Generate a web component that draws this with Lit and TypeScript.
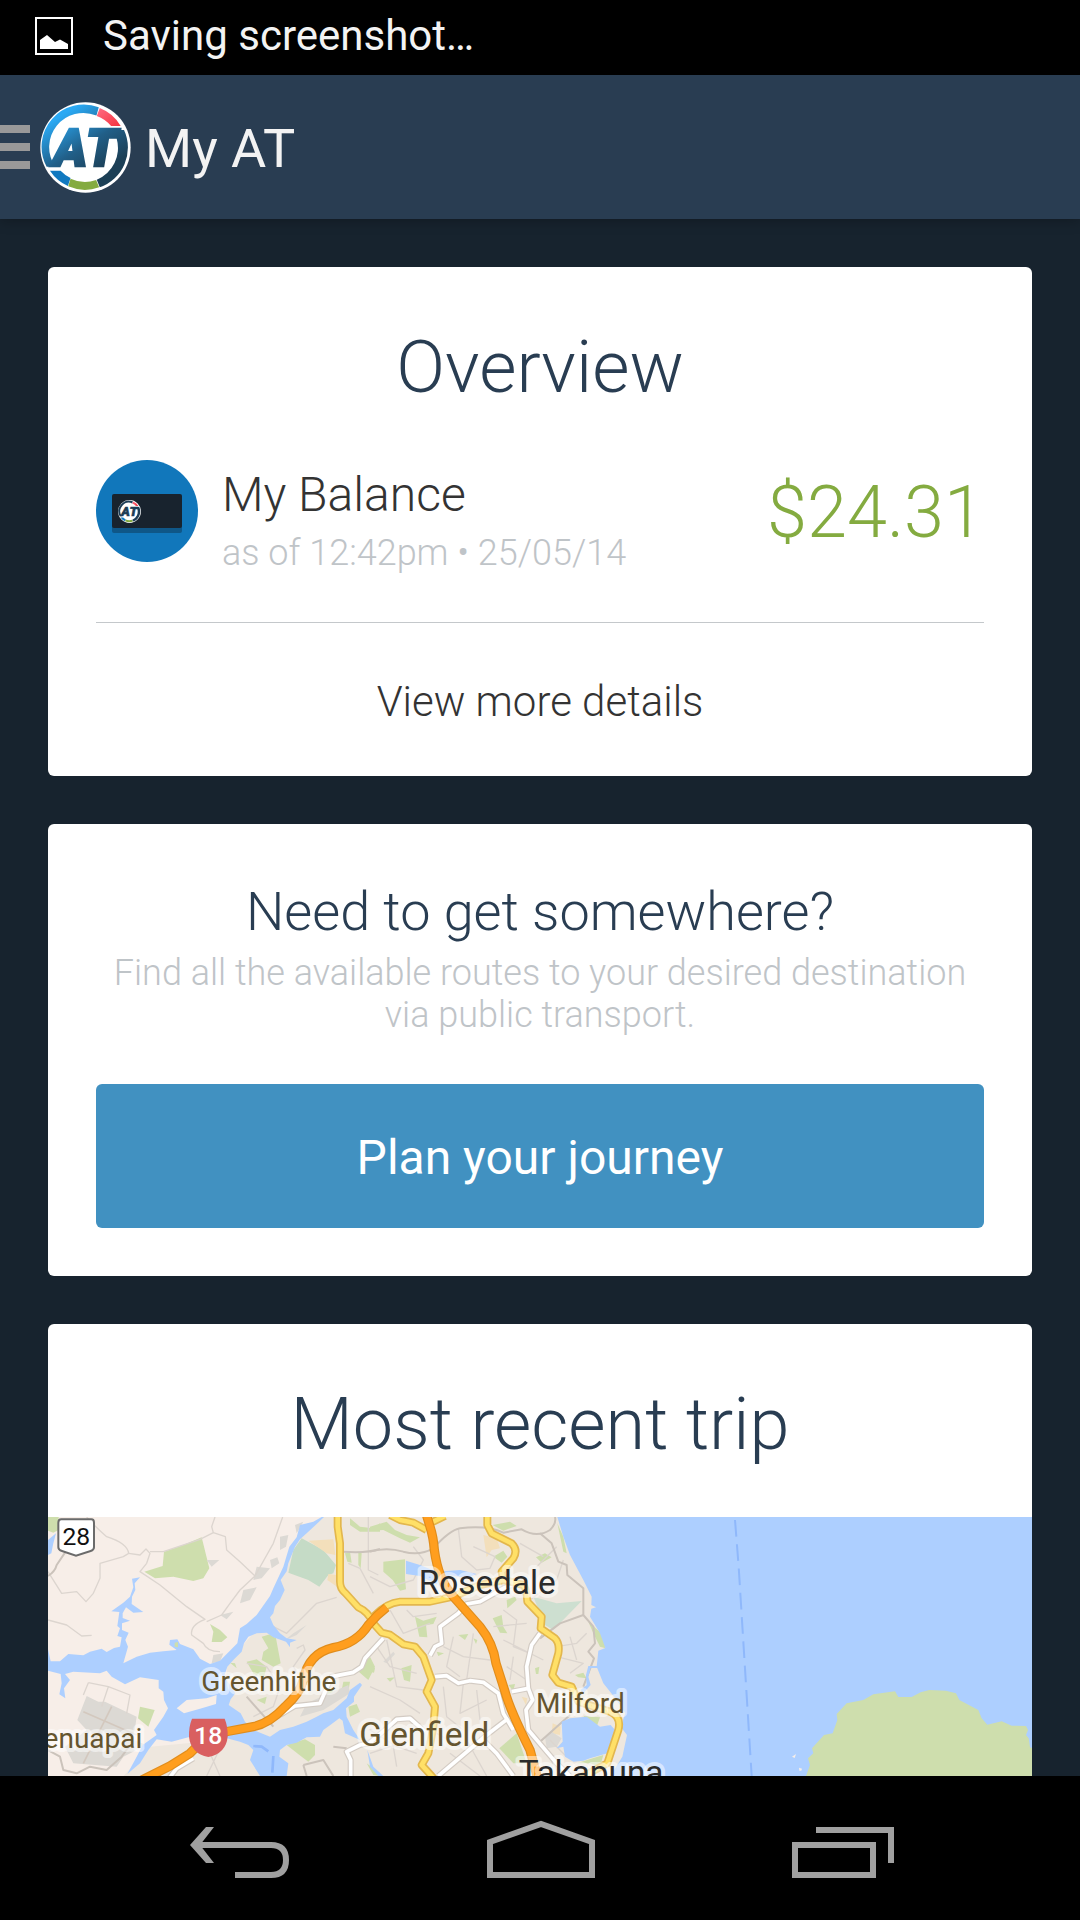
import { LitElement, html, svg, css } from "lit";
import { customElement } from "lit/decorators.js";

type Stroke = { d: string; dx?: number };

/* Road geometry; dx shifts a path eastwards on the map canvas. */
const EAST = 990;

const localStreets: Stroke[] = [
  { d: "M140 51Q165 80 200 110Q262 130 266 160L250 170L180 190V235L160 280L138 305L110 275L65 280L24 215" },
  { d: "M266 160L300 165L318 147L330 160L320 190L300 215L360 255L440 320L495 358Q450 375 455 405L490 430Q500 455 540 455" },
  { d: "M330 155L370 155L480 118L520 98L515 80L525 51" },
  { d: "M520 98L556 110L560 150L600 185L645 228L700 130L728 51" },
  { d: "M645 228L600 270L570 310L545 345L500 365" },
  { d: "M24 360L80 375L125 408L155 406" },
  { d: "M700 380L740 400L780 360L830 310L890 292" },
  { d: "M620 490L680 500L720 560L700 620L640 650" },
  { d: "M770 445L790 435L795 450L760 500L780 530" },
  { d: "M925 190L960 205L1000 280" },
  { d: "M985 51V210L1015 225" },
  { d: "M480 740L510 760L540 828M540 745L500 828" },
  { d: "M145 548L205 560L270 585L260 640M145 548L130 585M205 560L185 620" },
  { d: "M0 230L60 260L130 240L160 180L130 140" , dx: EAST },
  { d: "M265 85L275 170L320 210L360 205L375 170L310 140", dx: EAST },
  { d: "M60 330L100 400L180 370M110 330L130 350L200 340", dx: EAST },
  { d: "M220 440L280 470L360 480M250 410L230 500L270 530M310 400L290 540", dx: EAST },
  { d: "M20 440L60 500L140 520M50 420L80 560L160 570M0 560L90 600L150 640", dx: EAST },
  { d: "M220 560L230 650L280 690M280 550L270 640L350 600M320 570L330 660", dx: EAST },
  { d: "M400 330L440 360L430 440L480 460M370 380L470 370M400 420L520 480", dx: EAST },
  { d: "M560 440L620 430L650 400M560 470L640 490L600 520M600 410L620 480", dx: EAST },
  { d: "M410 500L470 540M430 470L420 540", dx: EAST },
  { d: "M480 300L560 240L580 180M500 200L560 140M450 130L520 170", dx: EAST },
  { d: "M0 690L80 740L140 760M60 680L80 800M0 760L120 720", dx: EAST },
  { d: "M200 700L270 740M240 760L330 828M290 720L350 828", dx: EAST },
  { d: "M520 740L570 828M540 720L590 770M600 700L570 740", dx: EAST },
];

const mediumStreets: Stroke[] = [
  { d: "M24 228Q45 215 50 195L75 158" },
  { d: "M620 590L700 680" },
  { d: "M24 750L60 770L70 810L110 820L150 800L200 810L245 770L270 735" },
  { d: "M790 795L850 780L880 828M790 795L800 828M880 740L920 745" },
  { d: "M910 155Q980 160 1020 147" },
  { d: "M0 155Q50 140 100 155Q150 168 190 145Q240 90 270 85Q350 75 400 98L455 88Q500 115 540 90Q560 70 555 51", dx: EAST },
  { d: "M510 100L545 130L565 185L590 195L592 225L640 265V345L670 380L675 430L655 455L672 475L640 560", dx: EAST },
  { d: "M640 345L570 370L510 415M510 725L600 645", dx: EAST },
];

const whiteRoads: Stroke[] = [
  { d: "M720 645L765 618L840 610L875 530L940 517L965 500L975 475L1030 415" },
  { d: "M385 838L410 805L460 775" },
  { d: "M1000 727L960 735L920 755L932 780V860" },
  { d: "M180 467L195 440L215 430L210 380L265 340L290 312L330 305L400 265L440 250", dx: EAST },
  { d: "M195 530L230 527L265 550L300 542L340 547L385 580L400 640L430 690", dx: EAST },
  { d: "M510 400L485 435L470 500L475 565L488 600L468 630L475 690L560 790L600 828", dx: EAST },
  { d: "M475 565L425 575M415 655L350 705L205 828M340 720L380 760L430 828", dx: EAST },
  { d: "M0 727L45 690L80 658L120 655L165 695", dx: EAST },
];

const yellowRoads: Stroke[] = [
  { d: "M893 40V80L900 130V245Q900 265 915 278L955 322Q985 335 1000 370L1025 398L1050 404L1090 433L1125 440L1150 470L1175 540L1160 575L1185 620L1180 680L1165 760L1145 795L1175 828L1210 870" },
  { d: "M352 40V75L365 100L425 130Q445 150 430 175L395 215L400 240L460 255Q470 265 472 305L515 350L512 385L555 415Q570 430 565 460L547 525L565 548L605 560L625 605L720 635Q755 650 745 690L712 790L600 850", dx: EAST },
  { d: "M60 45L90 60L130 68L170 90M225 48L175 72", dx: EAST },
  { d: "M10 350Q50 308 90 305L180 305L250 290L330 255L400 240", dx: EAST },
];

const motorways: Stroke[] = [
  { d: "M290 848L390 798L450 760L505 705L570 693L640 680Q690 670 735 620Q780 580 790 540Q805 460 880 443Q950 430 985 375Q1010 345 1040 322" },
  { d: "M168 40L180 80Q190 110 193 150Q205 240 250 290L330 380Q370 430 378 490L405 575Q420 630 480 750L510 860", dx: EAST },
];

const lines = (roads: Stroke[], cls: string) =>
  svg`<g class=${cls}>${roads.map(
    (r) => svg`<path d=${r.d} transform="translate(${r.dx ?? 0} 0)"></path>`
  )}</g>`;

@customElement("at-logo")
export class AtLogo extends LitElement {
  static properties = { flat: { type: Boolean } };
  declare flat: boolean;

  static styles = css`
    :host { display: block; }
    .logo { display: block; width: 100%; height: 100%; }
    .mono { font: italic 900 156px Roboto, sans-serif; stroke-width: 7; }
  `;

  render() {
    const ink = this.flat ? "#1d3d56" : "url(#ink)";
    return html`
      <svg class="logo" viewBox="28 33 274 274" role="img" aria-label="Auckland Transport">
        <defs>
          <linearGradient id="ink" gradientUnits="userSpaceOnUse" x1="90" y1="75" x2="200" y2="250">
            <stop offset="0" stop-color="#2aa9f4"></stop>
            <stop offset=".55" stop-color="#215f88"></stop>
            <stop offset="1" stop-color="#1c3f56"></stop>
          </linearGradient>
          <linearGradient id="red" x1="0" y1="0" x2="1" y2="1">
            <stop offset="0" stop-color="#ff6d84"></stop>
            <stop offset="1" stop-color="#f5333f"></stop>
          </linearGradient>
        </defs>
        <circle cx="165" cy="170" r="136" fill="#fff"></circle>
        <path d="M205 49A127 127 0 0 0 48 228H74A103 103 0 0 1 198 74Z" fill=${ink}></path>
        <path d="M208 51A127 127 0 0 1 271 105H242A103 103 0 0 0 199 75Z" fill="url(#red)"></path>
        <path d="M58 240H90A103 103 0 0 0 120 262L112 286A127 127 0 0 1 58 240Z" fill="#1079c0"></path>
        <path d="M120 264A103 103 0 0 0 197 268L206 290A127 127 0 0 1 113 287Z" fill="#84ab40"></path>
        <path d="M230 117H281A127 127 0 0 1 208 290L199 267A103 103 0 0 0 259 144H230Z" fill=${ink}></path>
        <text class="mono" x="67" y="227" fill=${ink} stroke=${ink}>A</text>
        <text class="mono" x="166" y="227" fill=${ink} stroke=${ink}>T</text>
      </svg>
    `;
  }
}

@customElement("trip-map")
export class TripMap extends LitElement {
  static styles = css`
    :host { display: block; }
    .map { display: block; width: 100%; height: auto; }
    .local, .medium, .white, .yellow, .motorway { fill: none; stroke-linejoin: round; }
    .local { stroke: #dcd5cf; stroke-width: 4; }
    .medium { stroke: #cbc3bb; stroke-width: 6; }
    .white-casing { fill: none; stroke: #d3cbc3; stroke-width: 18; stroke-linejoin: round; }
    .white { stroke: #fff; stroke-width: 11; }
    .yellow-casing { fill: none; stroke: #e3b74d; stroke-width: 24; stroke-linejoin: round; }
    .yellow { stroke: #ffe067; stroke-width: 14; }
    .motorway-casing { fill: none; stroke: #e08d1c; stroke-width: 28; }
    .motorway { stroke: #ff9e1e; stroke-width: 21; }
    .label {
      font-family: Roboto, sans-serif;
      font-weight: 400;
      paint-order: stroke;
      stroke: #fff;
      stroke-opacity: .5;
      stroke-width: 24;
      stroke-linejoin: round;
    }
    .town { font-size: 100px; fill: #2b2b2b; }
    .suburb { font-size: 100px; fill: #65552f; }
    .village { font-size: 84px; fill: #65552f; }
    .edge { text-anchor: end; }
    .shield { font: 400 74px Roboto, sans-serif; text-anchor: middle; }
    .strong { font-weight: 500; }
  `;

  render() {
    return html`
      <svg class="map" viewBox="24 51 2952 1440" role="img" aria-label="Map of the most recent trip">
        <rect x="24" y="51" width="2952" height="1440" fill="#f7eee8"></rect>
        <path fill="#eee7de" d="M848 51L770 112L720 250L690 350L640 400L560 490V620L640 700L600 715L330 740L240 840V1491H2976V51Z"></path>

        <g fill="#cedead">
          <path d="M24 51H56V90L40 98L24 92Z"></path>
          <path d="M313 215L368 198L372 155L430 135L485 112L508 205L490 235L460 243L400 230L345 235Z"></path>
          <path d="M510 372L540 390L562 412L545 426H515L520 395Z"></path>
          <path d="M665 410L690 403L708 415L722 490L700 500L665 480L670 455L685 445Z"></path>
          <path d="M620 485L650 478L680 500L670 540L640 520Z"></path>
          <path d="M300 620L344 630L325 680L294 655Z"></path>
          <path d="M740 735L795 718L825 735V765L805 785L785 770Z"></path>
          <path d="M930 55L960 80L1000 85L1020 70V95L960 95L930 75Z"></path>
          <path d="M950 510L990 470L1005 500L985 540ZM910 545L930 545L925 572L905 570ZM925 620L950 612L960 635L930 650ZM915 160L930 155L935 188L922 185ZM955 155L965 160L962 205L955 195ZM980 790L1020 820V828L1000 825Z"></path>
          <path d="M650 600L680 590L675 612ZM860 560L880 570L870 590L850 580ZM570 488L585 490L590 505Z"></path>
        </g>
        <path fill="#c5dbc6" d="M785 115L850 150L888 195L880 220L865 225L838 260L805 240L745 218L760 150Z"></path>
        <path fill="#f3dfbb" d="M805 122L880 118L886 165L860 160ZM865 222L888 225V258L862 240Z"></path>
        <path fill="#dcd9d4" d="M140 588L175 605L195 605L290 650L280 720L320 735L250 770L230 800L100 790L75 740L140 690L112 660Z"></path>
        <path fill="none" stroke="#d3c8be" stroke-width="5" d="M130 635L290 705M215 620L130 790"></path>
        <path fill="#dcd9d4" d="M765 75L790 65L770 100ZM720 110L745 105L738 140L720 150ZM690 180L712 172L718 190L695 205ZM650 200L690 205L665 235L640 240ZM610 270L650 262L630 300L600 310ZM540 345L580 335L560 358ZM500 180L538 180L515 200ZM520 465L550 460L540 485L515 490ZM800 610L925 555L930 580L850 630L780 650ZM760 400L800 375L770 405L735 420Z"></path>

        <g fill="#cedead" transform="translate(990 0)">
          <path d="M0 80L50 65L75 90L110 105L150 112L120 128L90 115L40 90L0 92Z"></path>
          <path d="M40 185L105 178V235L108 268L90 272L68 240L40 215Z"></path>
          <path d="M135 350L160 362L200 350L190 372L168 375L172 412L148 410Z"></path>
          <path d="M368 355L395 345L400 380L412 400L390 398Z"></path>
          <path d="M94 505L125 495L120 545L102 540ZM0 490L15 505L12 518L0 515ZM50 535L75 532L60 545ZM265 405L295 402L285 420ZM200 455L222 460L205 468ZM495 505L508 500L505 522L498 522ZM310 415L322 420L318 432Z"></path>
          <path d="M388 745L440 700L470 790L430 790Z"></path>
          <path d="M370 170L400 152L412 170L395 188ZM498 172L525 160L545 172L515 188ZM368 75L420 65L440 78L400 92ZM410 300L435 290L440 300L412 325Z"></path>
          <path d="M562 70L580 110L590 160L580 155ZM655 365L700 405L707 445L690 440L670 400ZM640 648L690 652L680 680L660 668ZM620 790L700 765L690 800L660 790ZM615 525L640 518L650 535L625 532ZM415 555L435 552L430 572Z"></path>
        </g>
        <g transform="translate(990 0)">
          <path fill="#f3dfbb" d="M340 105L380 115L390 145L365 150L350 172ZM548 670L572 680L570 705L545 700ZM455 590L472 595L468 615Z"></path>
          <path fill="#cddfd0" d="M490 290L560 310L635 303L550 390L525 375Z"></path>
          <path fill="#dcd9d4" d="M525 710L545 695L575 715L560 740L530 745ZM40 485L70 455L75 462L50 490Z"></path>
        </g>

        ${lines(localStreets, "local")}
        ${lines(mediumStreets, "medium")}

        <g fill="#adcfff">
          <path d="M24 448L32 484L60 484L85 462L130 466L150 455L185 446L200 456L222 444L240 440L245 412L232 408L240 385L232 378L238 336L214 334L250 308L270 290L280 262L276 236L300 232L284 250L286 270L276 290L275 312L310 336L280 338L258 322L248 340V354L270 362L246 370V390L266 398L256 420L264 440L250 490L290 470L330 458L370 454L410 450L388 434L390 420L412 418L420 432L460 448L480 476L510 492L540 482L560 462L592 430L600 385L620 372L650 345L690 288L700 265L730 200L748 140L770 112L780 75L820 65L845 51H852L830 72L800 100L780 118L765 140L745 190L740 214L722 240L734 270L720 300L705 318L700 340L690 352L700 375L720 400L740 415L770 420L750 428V442L738 425L700 412L680 398L650 400L625 410L612 430L605 455L580 480L562 500L552 530L570 555L586 580L572 598L566 615L602 640L615 665L640 690L690 710L720 690L760 680L800 665L830 650L850 640L880 630L920 595L930 570L960 548L966 555L942 590V605L918 625L920 650L940 690L960 720L915 700L908 662L898 655L875 672L850 690L840 710L800 712L770 728L740 735L720 750L718 770L745 790L740 828V1491H660V828L630 780L640 750L625 735L600 725L560 715L445 712L395 725L350 718L325 750L300 790L262 822L290 770L308 735L350 705L342 690L370 650L384 625L372 600L370 575L356 565V540L300 532L255 553L215 530L200 512L180 520L100 515L75 522L90 540L72 565L76 595L58 583L65 550L62 522L24 512Z"></path>
          <path d="M48 100L24 120V165L34 160L40 130Z"></path>
          <path d="M982 750L1000 800L1030 828L1015 828L990 800Z"></path>
        </g>
        <path fill="#f7eee8" d="M410 625L440 600L500 595L530 585L528 612L480 626L432 640Z"></path>
        <path fill="#cedead" d="M404 428L414 426V442L404 440Z"></path>
        <path fill="none" stroke="#8fb8fb" stroke-width="8" d="M640 738L665 740L685 754M700 768L697 818"></path>

        <g fill="#adcfff" transform="translate(990 0)">
          <path d="M562 51L580 110L600 165L640 240L665 290L664 315L678 322L664 326L660 350L690 400L706 444L685 452L680 500L700 550L740 600L766 640L752 680L771 705L757 770L720 830V1491H1986V51Z"></path>
          <path d="M575 665L600 655L650 650L690 680L722 675L735 690L712 760L660 775L640 782L610 785L585 770L580 740L560 745L578 725Z"></path>
          <path d="M108 182L150 195L200 215L270 210L320 222L290 235L240 225L215 260L150 228L108 222Z"></path>
          <path d="M655 498H682V504H662L655 530L662 555L640 580L632 570L650 555L648 525Z"></path>
        </g>

        ${lines(whiteRoads, "white-casing")}
        ${lines(whiteRoads, "white")}
        ${lines(yellowRoads, "yellow-casing")}
        ${lines(yellowRoads, "yellow")}
        ${lines(motorways, "motorway-casing")}
        ${lines(motorways, "motorway")}

        <g transform="translate(1980 0)">
          <path fill="#cedead" d="M318 828L330 795L324 775L340 760L336 745L372 705L398 700L412 660L410 642L440 610L490 600L520 583L585 574L595 591H635L662 577L688 570L738 572L768 580L778 600L835 630L845 655L862 674L905 664L935 677L978 678L984 690L978 705L986 715L990 742L1000 745V1491H318Z"></path>
          <path fill="#f7eee8" d="M276 770L288 762L284 774ZM297 803L306 806L304 812H298Z"></path>
          <path fill="none" stroke="#8fb8fb" stroke-width="6" stroke-dasharray="50 23" d="M105 60L116 200L155 828L190 1491"></path>
        </g>

        <text class="label town" x="1136" y="283">Rosedale</text>
        <text class="label town" x="1436" y="852">Takapuna</text>
        <text class="label suburb" x="958" y="738">Glenfield</text>
        <text class="label village" x="484" y="574">Greenhithe</text>
        <text class="label village" x="1488" y="638">Milford</text>
        <text class="label village edge" x="307" y="745">enuapai</text>

        <path fill="#fff" stroke="#6b6b6b" stroke-width="6" d="M64 58H154Q162 58 162 68V142Q162 150 152 153L108 167L66 153Q55 150 55 142V68Q55 58 64 58Z"></path>
        <text class="shield" x="109" y="135" fill="#111">28</text>
        <path fill="#d95f60" d="M456 656H554Q564 680 563 710Q558 760 505 771Q452 760 447 710Q446 680 456 656Z"></path>
        <text class="shield strong" x="505" y="731" fill="#fff">18</text>
      </svg>
    `;
  }
}

@customElement("app-root")
export class AppRoot extends LitElement {
  static styles = css`
    :host {
      display: flex;
      flex-direction: column;
      height: 100vh;
      overflow: hidden;
      background: #17232e;
      color: #333;
      font-family: Roboto, sans-serif;
      font-weight: 300;
    }
    h1, h2, h3, p { margin: 0; font-weight: inherit; }
    button { border: 0; padding: 0; background: none; font: inherit; color: inherit; cursor: pointer; }
    svg { display: block; }

    .status {
      display: flex;
      align-items: center;
      gap: 30px;
      flex: none;
      height: 75px;
      box-sizing: border-box;
      padding: 0 35px 4px;
      background: #000;
      color: #f3f3f3;
      font-size: 42px;
      font-weight: 400;
    }
    .status-icon { width: 38px; height: 38px; }

    .bar {
      display: flex;
      align-items: center;
      gap: 14px;
      flex: none;
      height: 144px;
      background: #293d52;
      color: #f3f3f3;
      box-shadow: 0 2px 12px rgba(0, 0, 0, .25);
    }
    .drawer { display: flex; align-items: center; gap: 10px; }
    .lines { width: 30px; height: 44px; }
    .brand { width: 91px; height: 91px; }
    .bar-title { padding-top: 4px; font-size: 54px; line-height: 64px; font-weight: 400; }

    .feed {
      display: flex;
      flex-direction: column;
      gap: 48px;
      flex: 1;
      min-height: 0;
      overflow: hidden;
      padding: 48px 48px 0;
    }
    .card {
      flex: none;
      display: flex;
      flex-direction: column;
      border-radius: 6px;
      background: #fff;
      overflow: hidden;
    }
    .title {
      padding: 48px 48px 40px;
      font-size: 72px;
      line-height: 105px;
      text-align: center;
      color: #293d52;
    }

    .balance {
      display: flex;
      align-items: flex-start;
      gap: 24px;
      margin: 0 48px;
      padding-bottom: 46px;
      border-bottom: 1px solid #c4c8cb;
    }
    .badge { flex: none; display: flex; align-items: center; justify-content: center; width: 102px; height: 102px; border-radius: 50%; background: #1177bb; }
    .hop { display: flex; align-items: center; width: 70px; height: 34px; padding-left: 6px; box-sizing: border-box; border-radius: 2px; background: #18232e; box-shadow: 0 5px 0 #0f5788; }
    .hop-logo { width: 23px; height: 23px; }
    .account { flex: 1; }
    .name { font-size: 48px; line-height: 70px; }
    .hint { font-size: 36px; color: #bfc4c8; }
    .stamp { line-height: 46px; }
    .amount { font-size: 72px; line-height: 106px; color: #84ab40; }
    .more { height: 153px; padding-top: 4px; font-size: 42px; }

    .plan { padding: 48px; text-align: center; }
    .question { font-size: 54px; line-height: 80px; color: #293d52; }
    .blurb { line-height: 42px; }
    .journey { margin-top: 48px; height: 144px; padding-top: 2px; border-radius: 6px; background: #4191c1; color: #fff; font-size: 48px; font-weight: 400; }

    .nav {
      display: flex;
      flex: none;
      height: 144px;
      padding: 0 86px 0 88px;
      background: #000;
    }
    .key { flex: 1; display: flex; justify-content: center; }
    .glyph { width: 108px; height: 144px; fill: none; stroke: #a0a0a0; stroke-width: 6; }
  `;

  render() {
    return html`
      <div class="status">
        <svg class="status-icon" viewBox="0 0 38 38" aria-hidden="true">
          <rect x="1" y="1" width="36" height="36" fill="none" stroke="#fff" stroke-width="2"></rect>
          <path fill="#fff" d="M5 23L12 18L20 25L25 22.500L33 27V32H5Z"></path>
        </svg>
        <span>Saving screenshot…</span>
      </div>

      <header class="bar">
        <button class="drawer" aria-label="Open navigation drawer">
          <svg class="lines" viewBox="0 0 30 44" aria-hidden="true">
            <path fill="#999" d="M0 0H30V8H0ZM0 18H30V26H0ZM0 36H30V44H0Z"></path>
          </svg>
          <at-logo class="brand"></at-logo>
        </button>
        <h1 class="bar-title">My AT</h1>
      </header>

      <main class="feed">
        <section class="card">
          <h2 class="title">Overview</h2>
          <div class="balance">
            <div class="badge">
              <div class="hop"><at-logo class="hop-logo" flat></at-logo></div>
            </div>
            <div class="account">
              <h3 class="name">My Balance</h3>
              <p class="hint stamp">as of 12:42pm • 25/05/14</p>
            </div>
            <div class="amount">$24.31</div>
          </div>
          <button class="more">View more details</button>
        </section>

        <section class="card plan">
          <h2 class="question">Need to get somewhere?</h2>
          <p class="hint blurb">Find all the available routes to your desired destination via public transport.</p>
          <button class="journey">Plan your journey</button>
        </section>

        <section class="card">
          <h2 class="title">Most recent trip</h2>
          <trip-map></trip-map>
        </section>
      </main>

      <nav class="nav" aria-label="System">
        <button class="key" aria-label="Back">
          <svg class="glyph" viewBox="0 0 108 144">
            <path d="M14 69H86Q101 69 101 84T86 99H50"></path>
            <path fill="#a0a0a0" stroke="none" d="M5 69L21 51H29L15 69L29 87H21Z"></path>
          </svg>
        </button>
        <button class="key" aria-label="Home">
          <svg class="glyph" viewBox="0 0 108 144"><path d="M3 66L54 48L105 66V99H3Z"></path></svg>
        </button>
        <button class="key" aria-label="Recent apps">
          <svg class="glyph" viewBox="0 0 108 144"><path d="M6 69H84V99H6ZM27 54H102V87"></path></svg>
        </button>
      </nav>
    `;
  }
}
